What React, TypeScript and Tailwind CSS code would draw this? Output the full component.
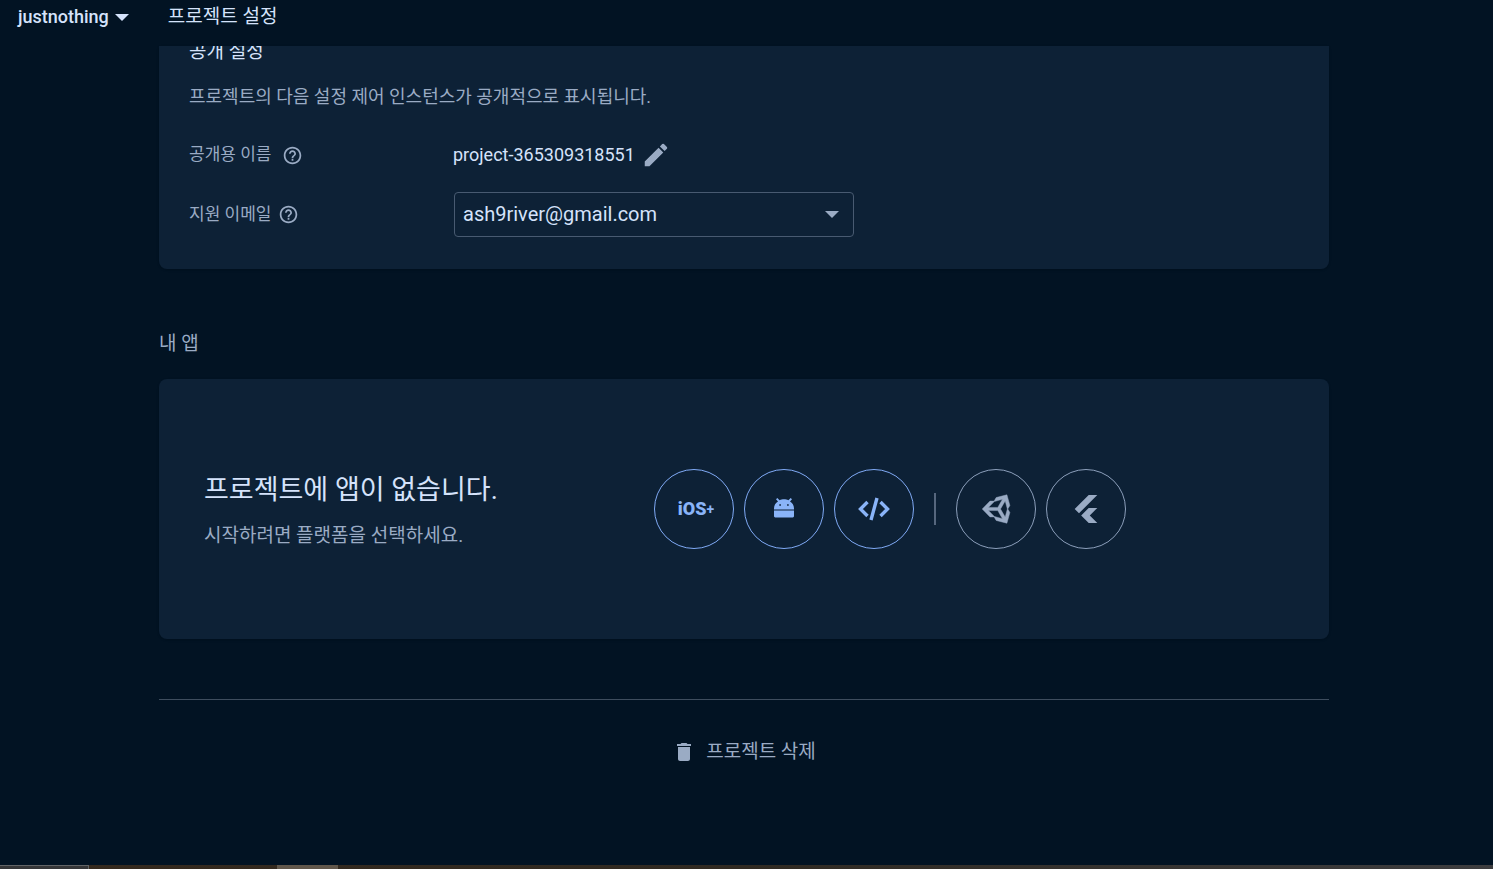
import { useState } from "react";
import type { ReactNode } from "react";
import { MdDelete, MdEdit, MdHelpOutline } from "react-icons/md";
import { SiFlutter } from "react-icons/si";

function Caret({ className }: { className: string }) {
  return (
    <svg viewBox="0 0 14 7" className={className} fill="currentColor" aria-hidden="true">
      <path d="M0 0h14L7 7z" />
    </svg>
  );
}

function AndroidIcon() {
  return (
    <svg viewBox="0 0 20 20" className="mb-0.5 size-5" fill="currentColor" aria-hidden="true">
      <path
        fillRule="evenodd"
        d="M0 11.4V10.5C0 7.2 1.6 4.6 4 3.4L2 1.200 3.300 0 5.600 2.300C6.900 1.500 8.400 1.200 10 1.200s3.100.3 4.400 1.100L16.700 0 18 1.200 16 3.400c2.400 1.200 4 3.800 4 7.100v.9zM5.300 6.200v1.600h1.600V6.200zM13.100 6.200v1.600h1.600V6.200z"
      />
      <path d="M0 12.600h20v5.500c0 .8-.5 1.300-1.300 1.300H1.300C.5 19.400 0 18.900 0 18.100z" />
    </svg>
  );
}

function CodeIcon() {
  return (
    <svg viewBox="0 0 32 24" className="h-6 w-8" fill="none" stroke="currentColor" strokeWidth="3.4" aria-hidden="true">
      <path d="M9.500 5 2.500 12l7 7M22.500 5l7 7-7 7M19 1l-6 22" />
    </svg>
  );
}

function UnityIcon() {
  return (
    <svg
      viewBox="1 2.5 18.6 19"
      className="size-[30px]"
      fill="currentColor"
      stroke="currentColor"
      strokeWidth="0.3"
      aria-hidden="true"
    >
      <path d="M9.11,17H6.5L1.59,12L6.5,7H9.11L10.42,4.74L17.21,3L19.08,9.74L17.77,12L19.08,14.26L17.21,21L10.42,19.26L9.11,17M9.25,16.75L14.38,18.13L11.42,13H5.5L9.25,16.75M16.12,17.13L17.5,12L16.12,6.87L13.15,12L16.12,17.13M9.25,7.25L5.5,11H11.42L14.38,5.87L9.25,7.25Z" />
    </svg>
  );
}

function PlatformButton({ label, muted, children }: { label: string; muted?: boolean; children: ReactNode }) {
  return (
    <button
      type="button"
      aria-label={label}
      className={`flex size-20 items-center justify-center rounded-full border ${
        muted ? "border-[#8c9fbb] text-[#9aabc4]" : "border-[#80aaf5] text-[#8ab4f8]"
      }`}
    >
      {children}
    </button>
  );
}

function HelpButton({ label }: { label: string }) {
  return (
    <button type="button" aria-label={label} className="text-[#9aabc4]">
      <MdHelpOutline className="size-[21px]" />
    </button>
  );
}

export default function App() {
  const [email, setEmail] = useState("ash9river@gmail.com");

  return (
    <div className="flex min-h-screen flex-col bg-[#021323] font-['Roboto','Noto_Sans_CJK_KR',sans-serif] text-[#9aabc4]">
      <header className="flex h-[46px] shrink-0 items-start gap-[39px] px-[18px] pt-[5px] text-[#d5e3fb]">
        <button type="button" className="flex items-center gap-1.5 text-lg leading-6 font-medium">
          justnothing
          <Caret className="h-[7px] w-[14px]" />
        </button>
        <h1 className="text-[19px] leading-6">프로젝트 설정</h1>
      </header>

      <main className="flex-1 pr-[5px]">
        <div className="mx-auto max-w-[1170px]">
          <section className="overflow-hidden rounded-b-lg bg-[#0d2136] px-[30px] pb-8 shadow-sm">
            <h2 className="-mt-1.5 text-[19px] leading-6 text-[#d5e3fb]">공개 설정</h2>
            <p className="mt-[21px] text-lg leading-6">프로젝트의 다음 설정 제어 인스턴스가 공개적으로 표시됩니다.</p>
            <div className="mt-[31px] flex h-[30px] items-center">
              <div className="flex w-[264px] items-center gap-[11px] text-[17px]">
                <span>공개용 이름</span>
                <HelpButton label="공개용 이름 도움말" />
              </div>
              <span className="text-lg text-[#d5e3fb]">project-365309318551</span>
              <button type="button" aria-label="공개용 이름 수정" className="ml-1.5">
                <MdEdit className="size-[30px]" />
              </button>
            </div>
            <div className="mt-[22px] flex items-center">
              <div className="flex w-[265px] items-center gap-[7px] text-[17px]">
                <label htmlFor="support-email">지원 이메일</label>
                <HelpButton label="지원 이메일 도움말" />
              </div>
              <div className="relative w-[400px]">
                <select
                  id="support-email"
                  value={email}
                  onChange={(event) => setEmail(event.target.value)}
                  className="h-[45px] w-full appearance-none rounded border border-[#485a71] bg-[#0d2136] px-2 pb-0.5 text-xl text-[#d5e3fb]"
                >
                  <option>ash9river@gmail.com</option>
                </select>
                <Caret className="pointer-events-none absolute top-[19px] right-[15px] h-[7px] w-[14px]" />
              </div>
            </div>
          </section>

          <h2 className="mt-[63px] text-[19px] leading-6">내 앱</h2>
          <section className="mt-[23px] flex h-[260px] items-center rounded-lg bg-[#0d2136] pl-[45px] shadow-sm">
            <div className="w-[450px] pt-0.5">
              <h3 className="text-[27px] leading-9 text-[#d5e3fb]">프로젝트에 앱이 없습니다.</h3>
              <p className="mt-4 text-[19px] leading-6">시작하려면 플랫폼을 선택하세요.</p>
            </div>
            <div className="flex items-center gap-[10px]">
              <PlatformButton label="iOS+">
                <span className="flex items-center pl-1 text-lg font-black">
                  iOS<span className="text-sm font-bold">+</span>
                </span>
              </PlatformButton>
              <PlatformButton label="Android">
                <AndroidIcon />
              </PlatformButton>
              <PlatformButton label="웹">
                <CodeIcon />
              </PlatformButton>
              <div className="mx-[10px] h-8 w-0.5 bg-[#56677e]" />
              <PlatformButton label="Unity" muted>
                <UnityIcon />
              </PlatformButton>
              <PlatformButton label="Flutter" muted>
                <SiFlutter className="size-7" />
              </PlatformButton>
            </div>
          </section>

          <hr className="mt-[60px] border-[#3e4d5e]" />
          <div className="flex justify-center pt-10">
            <button type="button" className="flex items-center gap-[10px] text-[19px] leading-6">
              <MdDelete className="size-6" />
              프로젝트 삭제
            </button>
          </div>
        </div>
      </main>

      <footer className="flex h-1 shrink-0 bg-linear-to-r from-[#35291d] via-[#302a22] to-[#3d3d3f]">
        <div className="w-[89px] border-t border-r border-[#626466] bg-[#353638]" />
        <div className="ml-[188px] w-[61px] bg-[#61574b]" />
      </footer>
    </div>
  );
}
